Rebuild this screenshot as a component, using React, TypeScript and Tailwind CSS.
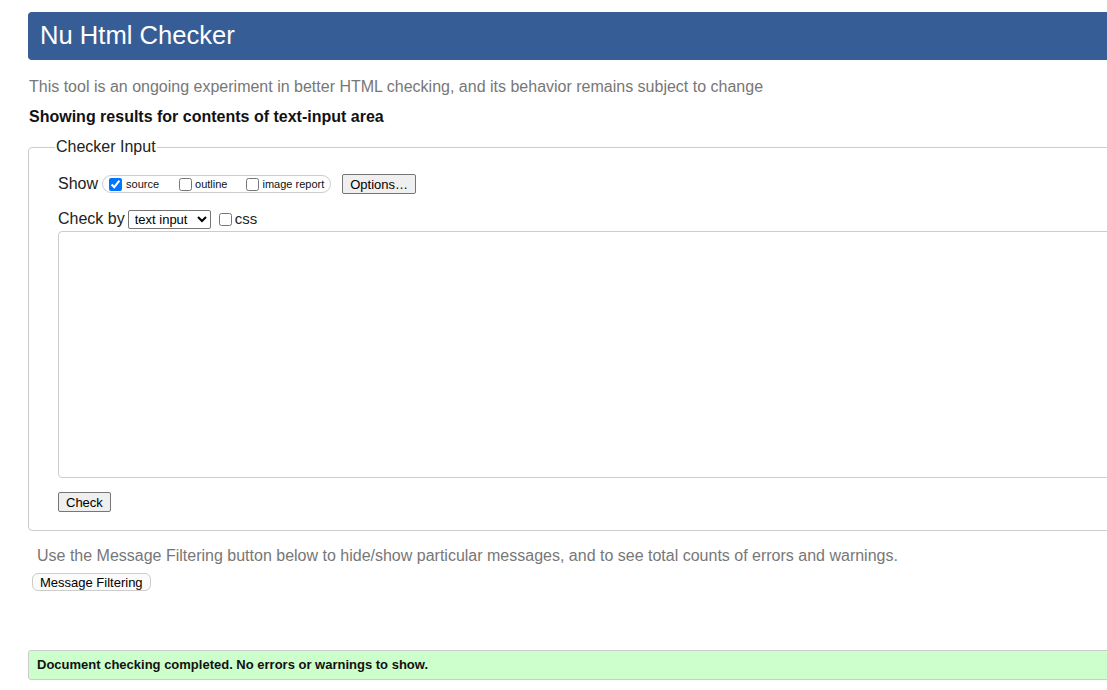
import React from "react";

const font = { fontFamily: '"Liberation Sans", Arial, sans-serif' };

function Check({ checked = false }: { checked?: boolean }) {
  return (
    <input
      type="checkbox"
      defaultChecked={checked}
      className="m-0 h-[13px] w-[13px] shrink-0 accent-[#0075ff]"
    />
  );
}

export default function App() {
  return (
    <div className="h-[690px] w-full overflow-hidden bg-white text-[#111]" style={font}>
      <div className="w-[1140px] pl-[28px] pt-[12px]">
        <header className="flex h-[48px] items-center rounded-l-[4px] bg-[#365d95] pl-[12px]">
          <h1 className="text-[25.6px] leading-none text-white">Nu Html Checker</h1>
        </header>

        <p className="mt-[17px] pl-px text-[16px] leading-[20px] text-[#777]">
          This tool is an ongoing experiment in better HTML checking, and its behavior remains
          subject to change
        </p>
        <p className="mt-[10px] pl-px text-[16px] font-bold leading-[20px] text-[#111]">
          Showing results for contents of text-input area
        </p>

        <fieldset className="mt-[10px] rounded-[4px] border border-[#ccc] pb-[18px]">
          <legend className="ml-[26px] px-px text-[16px] leading-[20px] text-[#222]">
            Checker Input
          </legend>

          <div className="pl-[29px]">
            <div className="mt-[17px] flex h-[20px] items-center">
              <span className="text-[16px] leading-[20px] text-[#222]">Show</span>
              <div className="ml-[4px] flex h-[18px] items-center rounded-[9px] border border-[#ccc] pl-[6px] pr-[6px] text-[11px]">
                <Check checked />
                <span className="ml-[4px]">source</span>
                <span className="ml-[20px] flex items-center">
                  <Check />
                </span>
                <span className="ml-[3px]">outline</span>
                <span className="ml-[19px] flex items-center">
                  <Check />
                </span>
                <span className="ml-[3px]">image report</span>
              </div>
              <button className="ml-[11px] h-[20px] rounded-[2px] border border-[#767676] bg-[#efefef] px-[7px] text-[13px] leading-none text-black">
                Options…
              </button>
            </div>

            <div className="mt-[15px] flex h-[20px] items-center">
              <span className="text-[16px] leading-[20px] text-[#222]">Check by</span>
              <select className="ml-[3px] h-[19px] w-[83px] rounded-[2px] border border-[#767676] bg-white pl-[2px] text-[13px] text-black">
                <option>text input</option>
                <option>address</option>
                <option>file upload</option>
              </select>
              <span className="ml-[8px] flex items-center">
                <Check />
              </span>
              <span className="ml-[3px] text-[15px] text-[#222]">css</span>
            </div>

            <textarea className="mt-[2px] block h-[247px] w-full resize-none rounded-[4px] border border-[#ccc] bg-white" />

            <button className="mt-[14px] block h-[20px] rounded-[2px] border border-[#767676] bg-[#efefef] px-[7px] text-[13px] leading-none text-black">
              Check
            </button>
          </div>
        </fieldset>

        <p className="mt-[15px] pl-[9px] text-[16px] leading-[20px] text-[#777]">
          Use the Message Filtering button below to hide/show particular messages, and to see total
          counts of errors and warnings.
        </p>
        <button className="ml-[4px] mt-[7px] block h-[18px] rounded-[6px] border border-[#ccc] bg-[#fbfbfb] px-[7px] text-[13px] leading-none text-black">
          Message Filtering
        </button>

        <div className="mt-[59px] flex h-[30px] items-center rounded-[3px] border border-[#ccc] bg-[#ccffcc] pl-[8px]">
          <p className="text-[13px] font-bold text-[#111]">
            Document checking completed. No errors or warnings to show.
          </p>
        </div>
      </div>
    </div>
  );
}
